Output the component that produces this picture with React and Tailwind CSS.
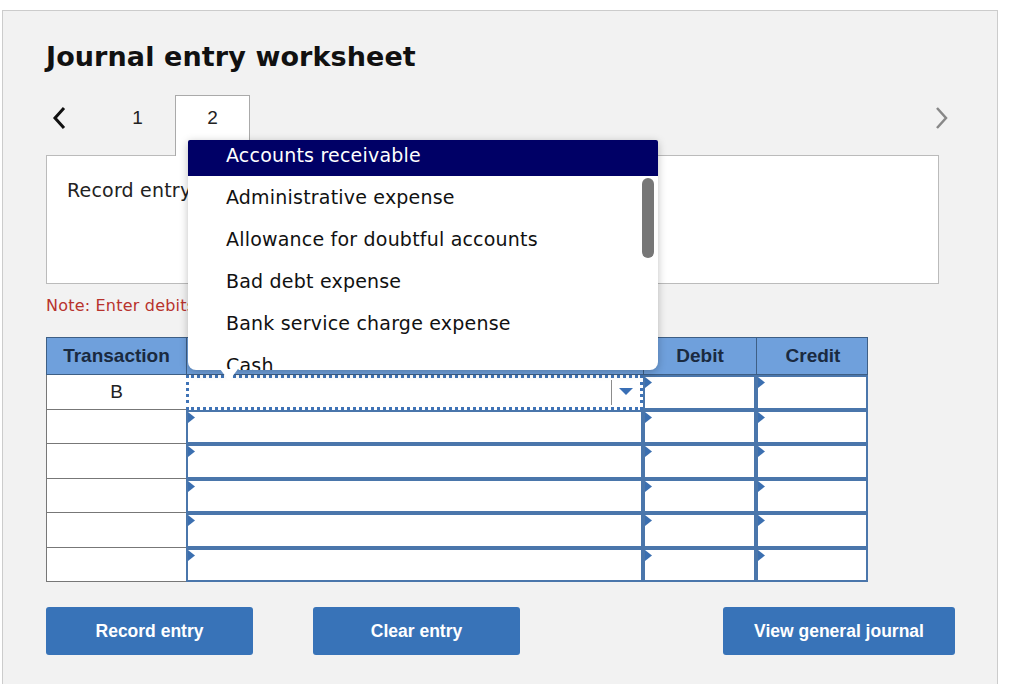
import React from 'react'

const verdana = { fontFamily: '"DejaVu Sans", Verdana, sans-serif' }
const arial = { fontFamily: '"Liberation Sans", Arial, sans-serif' }

const accounts = [
  'Accounts receivable',
  'Administrative expense',
  'Allowance for doubtful accounts',
  'Bad debt expense',
  'Bank service charge expense',
  'Cash',
]

function Flag() {
  return (
    <svg className="absolute left-0 top-0" width="8" height="11" viewBox="0 0 8 11">
      <polygon points="0,0 7,5.5 0,11" fill="#3b6fb0" />
    </svg>
  )
}

function InputCell({ focused }) {
  if (focused) {
    return (
      <div className="relative flex h-full items-stretch border-[3px] border-dotted border-[#3f73b6] bg-white">
        <div className="flex-1" />
        <div className="my-[2px] w-px bg-[#8c8c8c]" />
        <div className="flex w-[28px] items-center justify-center">
          <svg width="14" height="8" viewBox="0 0 14 8">
            <polygon points="0,0 14,0 7,7" fill="#3a6fb5" />
          </svg>
        </div>
      </div>
    )
  }
  return (
    <div className="relative h-full border-2 border-[#4a76ab] bg-white">
      <Flag />
    </div>
  )
}

export default function App() {
  return (
    <div className="relative h-[694px] w-[1016px] overflow-hidden bg-white pl-[2px] pt-[10px]">
      <div className="h-[674px] w-[996px] border border-b-0 border-[#cccccc] bg-[#f2f2f2] pl-[43px]">
        <h1 className="mt-[29px] text-[27px] font-bold leading-[34px] tracking-[0.1px] text-[#111]" style={verdana}>
          Journal entry worksheet
        </h1>

        {/* tabs */}
        <div className="mt-[21px] flex h-[60px] w-[906px] items-center pb-[14px]" style={arial}>
          <div className="flex w-[54px] items-center">
            <svg width="20" height="24" viewBox="0 0 20 24" className="ml-[4px]">
              <path d="M14 2 L5 12 L14 22" fill="none" stroke="#111" strokeWidth="3" />
            </svg>
          </div>
          <div className="flex w-[75px] items-center justify-center text-[19px] text-[#222]">1</div>
          <div className="relative z-10 -mb-[15px] flex h-[61px] w-[75px] items-center justify-center self-end border border-b-0 border-[#aaaaaa] bg-white pb-[16px] text-[19px] text-[#222]">
            2
          </div>
          <div className="ml-auto flex w-[20px] items-center">
            <svg width="20" height="24" viewBox="0 0 20 24">
              <path d="M5 2 L14 12 L5 22" fill="none" stroke="#888" strokeWidth="2.5" />
            </svg>
          </div>
        </div>

        <div className="h-[129px] w-[893px] border border-[#bbbbbb] bg-white pl-[20px] pt-[22px] text-[19px] leading-[24px] tracking-[0.2px] text-[#222]" style={verdana}>
          Record entry for the estimated bad debts.
        </div>

        <p className="mt-[12px] text-[16px] leading-[20px] tracking-[0.2px] text-[#b8332d]" style={verdana}>
          Note: Enter debits before credits.
        </p>

        {/* table */}
        <div className="mt-[21px] w-[822px]" style={arial}>
          <div className="grid h-[38px] grid-cols-[140px_457px_113px_112px] border border-[#3e5f85] bg-[#6fa0dc] text-[19px] font-bold text-[#1a2a40]">
            <div className="flex items-center justify-center border-r border-[#3e5f85]">Transaction</div>
            <div className="flex items-center justify-center border-r border-[#3e5f85]">General Journal</div>
            <div className="flex items-center justify-center border-r border-[#3e5f85]">Debit</div>
            <div className="flex items-center justify-center">Credit</div>
          </div>
          {[0, 1, 2, 3, 4, 5].map((r) => (
            <div key={r} className="grid h-[34.5px] grid-cols-[140px_457px_113px_112px]">
              <div className="flex items-center justify-center border-b border-l border-[#777] bg-white text-[19px] text-[#222]">
                {r === 0 ? 'B' : ''}
              </div>
              <InputCell focused={r === 0} />
              <InputCell />
              <InputCell />
            </div>
          ))}
        </div>

        {/* buttons */}
        <div className="mt-[25px] flex w-[909px] text-[17.5px] font-bold text-white" style={arial}>
          <button className="h-[48px] w-[207px] rounded-[3px] bg-[#3873b8]">Record entry</button>
          <button className="ml-[60px] h-[48px] w-[207px] rounded-[3px] bg-[#3873b8]">Clear entry</button>
          <button className="ml-auto h-[48px] w-[232px] rounded-[3px] bg-[#3873b8]">View general journal</button>
        </div>
      </div>

      {/* open dropdown */}
      <div className="absolute left-[188px] top-[140px] z-20 h-[230px] w-[470px]">
        <div className="relative h-full overflow-hidden rounded-b-[8px] rounded-t-[2px] bg-white shadow-[0_2px_8px_rgba(0,0,0,0.25)]" style={verdana}>
          <div className="-mt-[6px]">
            {accounts.map((a, i) => (
              <div
                key={a}
                className={
                  i === 0
                    ? 'flex h-[42px] items-center bg-[#000066] pl-[38px] text-[19px] tracking-[0.2px] text-white'
                    : 'flex h-[42px] items-center pl-[38px] text-[19px] tracking-[0.2px] text-[#111]'
                }
              >
                {a}
              </div>
            ))}
          </div>
          <div className="absolute right-[4px] top-[38px] h-[80px] w-[12px] rounded-full bg-[#777]" />
        </div>
        <svg className="absolute left-[32px] top-[229px]" width="18" height="13" viewBox="0 0 18 13">
          <polygon points="0,0 18,0 9,12" fill="#fff" />
        </svg>
      </div>
    </div>
  )
}
